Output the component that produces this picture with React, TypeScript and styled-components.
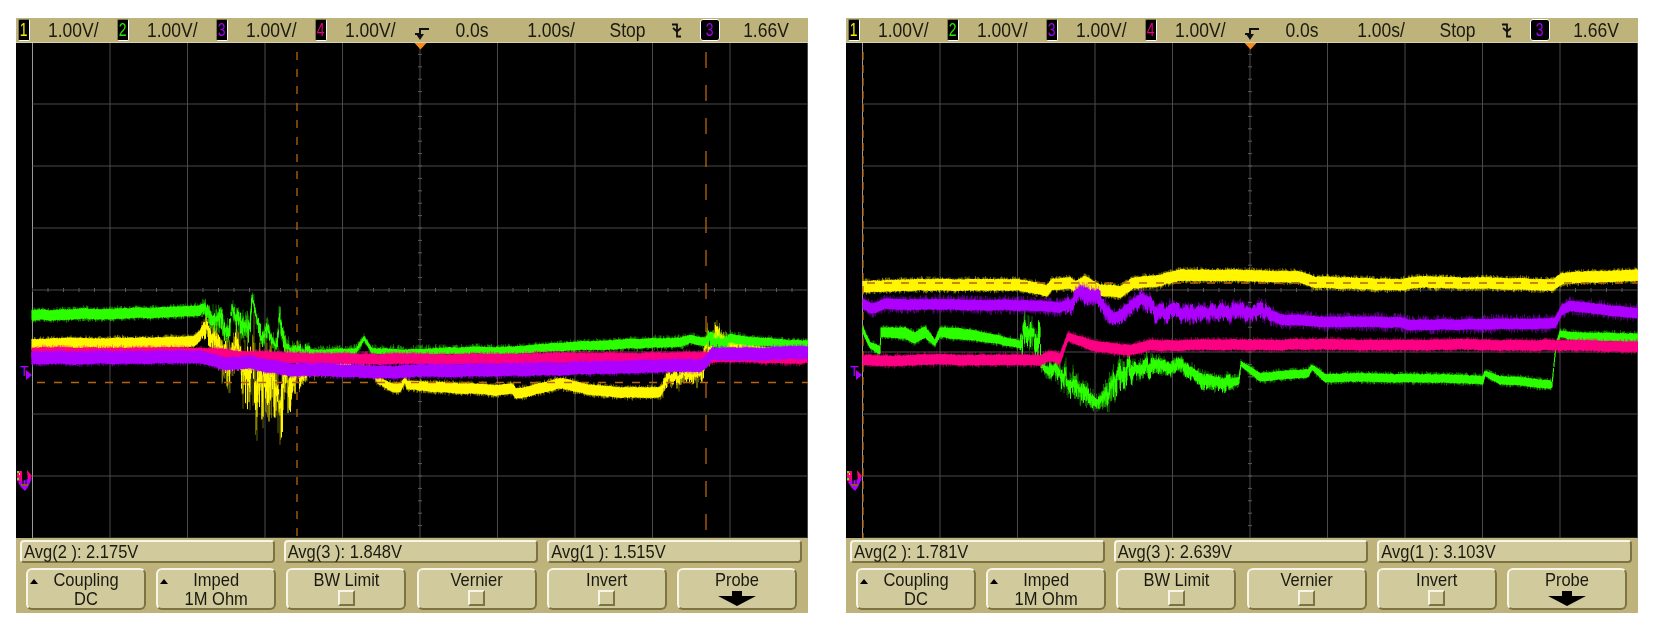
import styled, { createGlobalStyle } from "styled-components";

const GlobalStyle = createGlobalStyle`
  html, body {
    margin: 0;
    padding: 0;
    background: #fff;
  }
`;

const Page = styled.div`
  display: flex;
  gap: 38px;
  width: 1658px;
  height: 629px;
  padding: 18px 0 0 16px;
  box-sizing: border-box;
  overflow: hidden;
  font-family: "Liberation Sans", Arial, sans-serif;
  color: #1b1a10;
`;

const ScopeFrame = styled.div`
  display: flex;
  flex-direction: column;
  width: 792px;
  height: 595px;
  background: #bdb37b;
`;

const Header = styled.div`
  display: flex;
  align-items: center;
  height: 25px;
  padding-left: 2px;
  font-size: 17.5px;
  border-bottom: 1px solid #d8d2ac;
  box-sizing: border-box;
`;

const ChannelGroup = styled.div`
  display: flex;
  align-items: center;
  gap: 18px;
  width: 99px;
`;

const Tall = styled.span`
  display: inline-block;
  transform: scaleY(1.14);
`;

const Badge = styled.span<{ $color: string }>`
  display: flex;
  align-items: center;
  justify-content: center;
  width: 12px;
  height: 22px;
  background: #000;
  color: ${(p) => p.$color};
  font-size: 17px;
  border: 1px solid #7d7650;
  border-right-color: #fff;
  border-bottom-color: #fff;
  border-radius: 2px;
  box-sizing: border-box;

  ${Tall} {
    transform: scale(0.82, 1.1);
  }
`;

const SourceBadge = styled(Badge)`
  width: 20px;
  border: 1.5px solid #fff;
  border-radius: 3px;
`;

const HeaderCell = styled.div<{ $w: number }>`
  display: flex;
  justify-content: center;
  align-items: center;
  width: ${(p) => p.$w}px;
`;

const Display = styled.svg`
  display: block;
  width: 792px;
  height: 495px;
  background: #000;
`;

const Footer = styled.div`
  display: flex;
  flex-direction: column;
  gap: 5px;
  flex: 1;
  padding: 2px 6px 0 4px;
`;

const AvgRow = styled.div`
  display: grid;
  grid-template-columns: repeat(3, 1fr);
  gap: 9px;
`;

const AvgBox = styled.div`
  height: 23px;
  padding-left: 2px;
  font-size: 16.5px;
  line-height: 19px;
  white-space: pre;
  background: #d1ca9c;
  border: 2px solid #7c7345;
  border-top-color: #f7f5e6;
  border-left-color: #f7f5e6;
  border-radius: 4px;
  box-sizing: border-box;
`;

const SoftkeyRow = styled.div`
  display: grid;
  grid-template-columns: repeat(6, 120px);
  gap: 10.2px;
  padding-left: 6px;
`;

const Softkey = styled.div`
  position: relative;
  display: flex;
  flex-direction: column;
  align-items: center;
  height: 42px;
  padding-bottom: 2px;
  font-size: 16.5px;
  line-height: 18.5px;
  background: #d1ca9c;
  border: 2px solid #7c7345;
  border-top-color: #f7f5e6;
  border-left-color: #f7f5e6;
  border-radius: 6px;
  box-sizing: border-box;
`;

const PopupMark = styled.span`
  position: absolute;
  top: 9px;
  left: 2px;
  width: 0;
  height: 0;
  border-left: 4px solid transparent;
  border-right: 4px solid transparent;
  border-bottom: 5px solid #000;
`;

const CheckBox = styled.span`
  width: 17px;
  height: 17px;
  margin-top: 1px;
  border: 2px solid #7c7345;
  border-top-color: #f7f5e6;
  border-left-color: #f7f5e6;
  box-sizing: border-box;
`;

const ArrowIcon = styled.svg`
  display: block;
  width: 38px;
  height: 15px;
  margin-top: 2px;
`;

const GlyphIcon = styled.svg<{ $drop?: number }>`
  display: block;
  overflow: visible;
  transform: translateY(${(p) => p.$drop ?? 0}px);
`;

const Traces = styled.g`
  filter: blur(0.3px);
`;

type Pt = [number, number, number?, number?];

function rng(seed: number) {
  let s = seed >>> 0;
  return () => {
    s = (s + 0x6d2b79f5) >>> 0;
    let t = s;
    t = Math.imul(t ^ (t >>> 15), t | 1);
    t ^= t + Math.imul(t ^ (t >>> 7), t | 61);
    return ((t ^ (t >>> 14)) >>> 0) / 4294967296;
  };
}

// one vertical segment per half pixel, like an acquisition in peak detect
function band(points: Pt[], seed: number, thick: number, fuzz: number) {
  const rand = rng(seed);
  let core = "";
  let fringe = "";
  let wander = 0;
  let jag = 0;
  let jagLeft = 0;
  for (let i = 0; i < points.length - 1; i++) {
    const [x0, y0, t0 = thick, a0 = fuzz] = points[i];
    const [x1, y1, t1 = thick, a1 = fuzz] = points[i + 1];
    const steps = Math.max(1, Math.round((x1 - x0) * 2));
    for (let k = 0; k < steps; k++) {
      const f = k / steps;
      const x = x0 + (x1 - x0) * f;
      const t = t0 + (t1 - t0) * f;
      const a = a0 + (a1 - a0) * f;
      wander = wander * 0.97 + (rand() - 0.5) * 0.34;
      if (jagLeft-- <= 0) {
        jag = rand() - 0.5;
        jagLeft = 2 + Math.floor(rand() * 7);
      }
      const burst = a > 6 ? a : 0;
      const y = y0 + (y1 - y0) * f + wander + jag * burst * 0.9;
      const top = y - t / 2 - rand() * 0.9;
      const bot = y + t / 2 + rand() * 0.9;
      const spike = burst * Math.pow(rand(), 1.8) * 0.8;
      const xs = x.toFixed(1);
      core += `M${xs} ${(top - spike * 0.5).toFixed(1)}V${(bot + spike).toFixed(1)}`;
      const up = a * Math.pow(rand(), 2.2);
      const down = a * Math.pow(rand(), 2.2);
      fringe += `M${xs} ${(top - up).toFixed(1)}V${(bot + down).toFixed(1)}`;
    }
  }
  return { core, fringe };
}

const YELLOW = "#fff600";
const GREEN = "#2dff00";
const MAGENTA = "#fb0082";
const PURPLE = "#ae00ff";

type Trace = { color: string; pts: Pt[]; seed: number; thick: number; fuzz: number };

const leftTraces: Trace[] = [
  {
    color: YELLOW, seed: 11, thick: 9, fuzz: 3,
    pts: [
      [32, 344], [120, 343], [150, 342], [194, 342], [200, 336], [204, 325, 7, 8],
      [210, 335, 5, 14], [218, 345, 5, 22], [224, 352, 3, 40], [236, 350, 4, 18],
      [246, 372, 3, 50], [256, 385, 3, 50], [268, 390, 3, 48], [280, 395, 3, 45],
      [290, 378, 3, 30], [300, 372, 4, 12], [320, 368, 6, 6], [345, 367, 6, 6],
      [372, 370, 4, 5], [378, 381, 5, 3], [392, 387, 7], [400, 388, 8], [405, 380, 3, 6],
      [407, 385, 7], [440, 387], [500, 390], [512, 388], [516, 393], [530, 391], [560, 383],
      [590, 390], [620, 393], [660, 392], [665, 386, 5, 8], [670, 376, 4, 8], [682, 374, 3, 12],
      [690, 376, 3, 10], [702, 372, 3, 14], [708, 345, 4, 22], [716, 335, 5, 12],
      [730, 344, 5, 6], [760, 350, 5, 3], [808, 352, 5, 3],
    ],
  },
  {
    color: GREEN, seed: 23, thick: 9, fuzz: 3,
    pts: [
      [32, 315], [100, 314], [160, 313], [200, 311], [205, 306, 5, 8], [212, 325, 3, 14],
      [220, 320, 3, 16], [230, 330, 2, 12], [232, 305, 3, 8], [240, 325, 3, 14], [250, 322, 3, 16],
      [252, 295, 2, 10], [260, 335, 2, 12], [268, 328, 3, 12], [276, 345, 2, 8], [280, 320, 4, 16],
      [286, 350, 3, 8], [300, 350, 3, 8], [315, 352, 4, 5], [345, 352, 4, 4], [356, 351, 4, 5],
      [364, 338, 3, 3], [372, 351, 4, 4], [400, 352, 4, 6], [440, 351, 5, 4], [520, 350, 6, 3],
      [570, 346, 7, 3], [610, 345, 8, 3], [630, 343, 8, 3], [680, 342, 8, 4], [690, 339, 7, 4],
      [705, 342, 7, 3], [710, 335, 4, 12], [722, 340, 5, 10], [730, 338, 7, 5], [760, 342, 7, 3], [808, 345, 7, 3],
    ],
  },
  {
    color: MAGENTA, seed: 37, thick: 9, fuzz: 3,
    pts: [[32, 353], [200, 353], [240, 356], [300, 358], [330, 359], [500, 359], [700, 357], [808, 358]],
  },
  {
    color: PURPLE, seed: 41, thick: 11, fuzz: 3,
    pts: [
      [32, 358], [200, 357], [225, 364], [250, 362], [290, 370], [330, 370], [380, 372],
      [500, 370], [700, 366], [706, 362], [712, 354], [760, 353], [808, 352],
    ],
  },
];

const rightTraces: Trace[] = [
  {
    color: YELLOW, seed: 53, thick: 10, fuzz: 3,
    pts: [
      [863, 287], [900, 285], [1019, 285], [1040, 288], [1047, 290], [1052, 284], [1070, 283],
      [1075, 287], [1085, 282], [1090, 285], [1100, 290], [1120, 292], [1133, 283], [1155, 281],
      [1180, 275], [1300, 277], [1315, 282], [1400, 285], [1412, 282], [1500, 283], [1553, 285],
      [1562, 278], [1640, 275],
    ],
  },
  {
    color: GREEN, seed: 61, thick: 10, fuzz: 3,
    pts: [
      [863, 330, 5], [870, 345, 5], [880, 350, 7], [881, 332, 8], [905, 333], [915, 338], [925, 332],
      [935, 343, 5], [940, 332, 8], [955, 333], [1000, 340, 7], [1020, 344, 6], [1022, 336, 5, 20],
      [1040, 338, 5, 18], [1041, 364, 5, 5], [1050, 368, 5, 9], [1062, 372, 4, 14], [1075, 385, 3, 16],
      [1090, 395, 3, 14], [1098, 403, 3, 6], [1105, 395, 4, 16], [1120, 370, 4, 20], [1135, 368, 6, 9],
      [1183, 365, 6, 7], [1195, 375, 6, 7], [1205, 381, 7, 7], [1215, 380, 7, 7], [1230, 384, 7, 7],
      [1239, 381, 6], [1241, 364, 4], [1260, 378, 7], [1280, 375, 7], [1308, 373, 7], [1312, 367, 4],
      [1325, 378, 7], [1400, 378, 7], [1483, 380, 7], [1485, 373, 4], [1500, 380, 7], [1550, 384, 7],
      [1552, 384, 4], [1556, 345, 3], [1560, 333, 5], [1575, 336, 7], [1640, 338, 7],
    ],
  },
  {
    color: MAGENTA, seed: 71, thick: 9, fuzz: 3,
    pts: [
      [863, 360], [1040, 360], [1050, 356], [1060, 359], [1068, 337, 7], [1090, 345], [1110, 348],
      [1130, 350], [1150, 346], [1200, 345], [1555, 345], [1640, 347],
    ],
  },
  {
    color: PURPLE, seed: 83, thick: 9, fuzz: 5,
    pts: [
      [863, 304], [872, 309], [885, 304], [1040, 305], [1060, 308], [1070, 305, 8, 7], [1080, 293, 8, 7],
      [1090, 294, 8, 8], [1100, 300, 8, 8], [1115, 318, 8, 7], [1130, 306, 8, 7], [1140, 297, 8, 8],
      [1146, 302, 8, 8], [1155, 311, 8, 7], [1200, 313, 8, 7], [1263, 311, 8, 7], [1280, 319], [1320, 322],
      [1400, 322], [1410, 325], [1555, 323], [1562, 310], [1570, 306], [1640, 313],
    ],
  },
];

const shiftTrace = (t: Trace): Trace => ({
  ...t,
  pts: t.pts.map(([x, y, a, b]) => [x - 830, y, a, b] as Pt),
});

const verticals = Array.from({ length: 11 }, (_, i) => 32.5 + i * 77.5);
const horizontals = Array.from({ length: 9 }, (_, i) => 42 + i * 62);
const ticksX = Array.from({ length: 50 }, (_, i) => 32.5 + i * 15.5);
const ticksY = Array.from({ length: 40 }, (_, i) => 42 + i * 12.4);

const Grid = () => (
  <g stroke="#4a4a4a" strokeWidth="1">
    {verticals.map((x, i) => (
      <line key={x} x1={x} x2={x} y1={43} y2={538} stroke={i === 0 ? "#9a9a9a" : "#4a4a4a"} />
    ))}
    {horizontals.map((y) => (
      <line key={y} x1={32.5} x2={808} y1={y} y2={y} />
    ))}
    {ticksX.map((x) => (
      <line key={x} x1={x} x2={x} y1={288} y2={292} stroke="#5a5a5a" />
    ))}
    {ticksY.map((y) => (
      <line key={y} x1={418} x2={422} y1={y} y2={y} stroke="#5a5a5a" />
    ))}
  </g>
);

const TraceBand = ({ trace }: { trace: Trace }) => {
  const { core, fringe } = band(trace.pts, trace.seed, trace.thick, trace.fuzz);
  return (
    <g fill="none" stroke={trace.color}>
      <path d={fringe} strokeWidth="0.8" opacity="0.5" />
      <path d={core} strokeWidth="1" />
    </g>
  );
};

type Cursor = { x: number; dash: string };

const Screen = ({
  traces,
  cursors,
  level,
}: {
  traces: Trace[];
  cursors: Cursor[];
  level: number;
}) => (
  <Display viewBox="16 43 792 495">
    <Grid />
    <Traces>
      <TraceBand trace={traces[0]} />
      <g stroke="#b8640f" strokeWidth="1.3" fill="none">
        <line x1={37} x2={808} y1={level} y2={level} strokeDasharray="8 9" />
        {cursors.map((c) => (
          <line key={c.x} x1={c.x} x2={c.x} y1={52} y2={538} strokeDasharray={c.dash} />
        ))}
      </g>
      {traces.slice(1).map((t) => (
        <TraceBand key={t.seed} trace={t} />
      ))}
    </Traces>
    <polygon points="414.5,43 426.5,43 420.5,49.5" fill="#f58a1f" />
    <text x="20" y="376" fontSize="14" fill={PURPLE} fontFamily="Liberation Sans, sans-serif">
      T
    </text>
    <polygon points="26,370 32,375 26,380" fill={PURPLE} />
    <g>
      <polygon points="17,471 22,471 22,482 17,481" fill={MAGENTA} />
      <polygon points="27,470 32,476 28,482" fill={MAGENTA} />
      <rect x="17" y="471" width="2" height="2" fill={GREEN} />
      <rect x="17" y="478" width="2" height="2" fill={GREEN} />
      <rect x="19" y="473" width="1" height="2" fill={YELLOW} />
      <polygon points="18,482 32,478 28,487 25,491 21,487" fill={PURPLE} />
      <rect x="21" y="484" width="7" height="2" fill="#8c5a20" />
      <line x1="23" y1="474" x2="23" y2="484" stroke="#000" />
      <line x1="26" y1="478" x2="26" y2="484" stroke="#000" />
    </g>
  </Display>
);

const channels = [
  { n: "1", color: "#f5ee00" },
  { n: "2", color: "#27e800" },
  { n: "3", color: "#a900f5" },
  { n: "4", color: "#f0007c" },
];

const softkeys = [
  { top: "Coupling", bottom: "DC", popup: true },
  { top: "Imped", bottom: "1M Ohm", popup: true },
  { top: "BW Limit", check: true },
  { top: "Vernier", check: true },
  { top: "Invert", check: true },
  { top: "Probe", arrow: true },
];

const Scope = ({
  avgs,
  traces,
  cursors,
  level,
}: {
  avgs: string[];
  traces: Trace[];
  cursors: Cursor[];
  level: number;
}) => (
  <ScopeFrame>
    <Header>
      {channels.map((c) => (
        <ChannelGroup key={c.n}>
          <Badge $color={c.color}>
            <Tall>{c.n}</Tall>
          </Badge>
          <Tall>1.00V/</Tall>
        </ChannelGroup>
      ))}
      <HeaderCell $w={16}>
        <GlyphIcon $drop={4} width="14" height="14" viewBox="0 0 14 14">
          <path d="M0 7H5V2H14" fill="none" stroke="#111" strokeWidth="2" />
          <polygon points="1,7 9,7 5,13" fill="#111" />
        </GlyphIcon>
      </HeaderCell>
      <HeaderCell $w={84}>
        <Tall>0.0s</Tall>
      </HeaderCell>
      <HeaderCell $w={74}>
        <Tall>1.00s/</Tall>
      </HeaderCell>
      <HeaderCell $w={79}>
        <Tall>Stop</Tall>
      </HeaderCell>
      <HeaderCell $w={18}>
        <GlyphIcon width="9" height="15" viewBox="0 0 9 15">
          <path d="M0 1.5H5V13.5H9" fill="none" stroke="#111" strokeWidth="1.8" />
          <path d="M1 5L5 8.5L9 5" fill="none" stroke="#111" strokeWidth="1.8" />
        </GlyphIcon>
      </HeaderCell>
      <HeaderCell $w={50}>
        <SourceBadge $color="#a900f5">
          <Tall>3</Tall>
        </SourceBadge>
      </HeaderCell>
      <HeaderCell $w={62}>
        <Tall>1.66V</Tall>
      </HeaderCell>
    </Header>
    <Screen traces={traces} cursors={cursors} level={level} />
    <Footer>
      <AvgRow>
        {avgs.map((a) => (
          <AvgBox key={a}>
            <Tall>{a}</Tall>
          </AvgBox>
        ))}
      </AvgRow>
      <SoftkeyRow>
        {softkeys.map((k) => (
          <Softkey key={k.top}>
            {k.popup && <PopupMark />}
            <Tall>{k.top}</Tall>
            {k.bottom && <Tall>{k.bottom}</Tall>}
            {k.check && <CheckBox />}
            {k.arrow && (
              <ArrowIcon viewBox="0 0 38 15">
                <polygon points="14,0 24,0 24,5 38,5 19,15 0,5 14,5" fill="#000" />
              </ArrowIcon>
            )}
          </Softkey>
        ))}
      </SoftkeyRow>
    </Footer>
  </ScopeFrame>
);

const App = () => (
  <Page>
    <GlobalStyle />
    <Scope
      avgs={["Avg(2 ): 2.175V", "Avg(3 ): 1.848V", "Avg(1 ): 1.515V"]}
      traces={leftTraces}
      cursors={[
        { x: 297, dash: "8 9" },
        { x: 706, dash: "16 17" },
      ]}
      level={382.5}
    />
    <Scope
      avgs={["Avg(2 ): 1.781V", "Avg(3 ): 2.639V", "Avg(1 ): 3.103V"]}
      traces={rightTraces.map(shiftTrace)}
      cursors={[{ x: 33, dash: "8 5" }]}
      level={283}
    />
  </Page>
);

export default App;
